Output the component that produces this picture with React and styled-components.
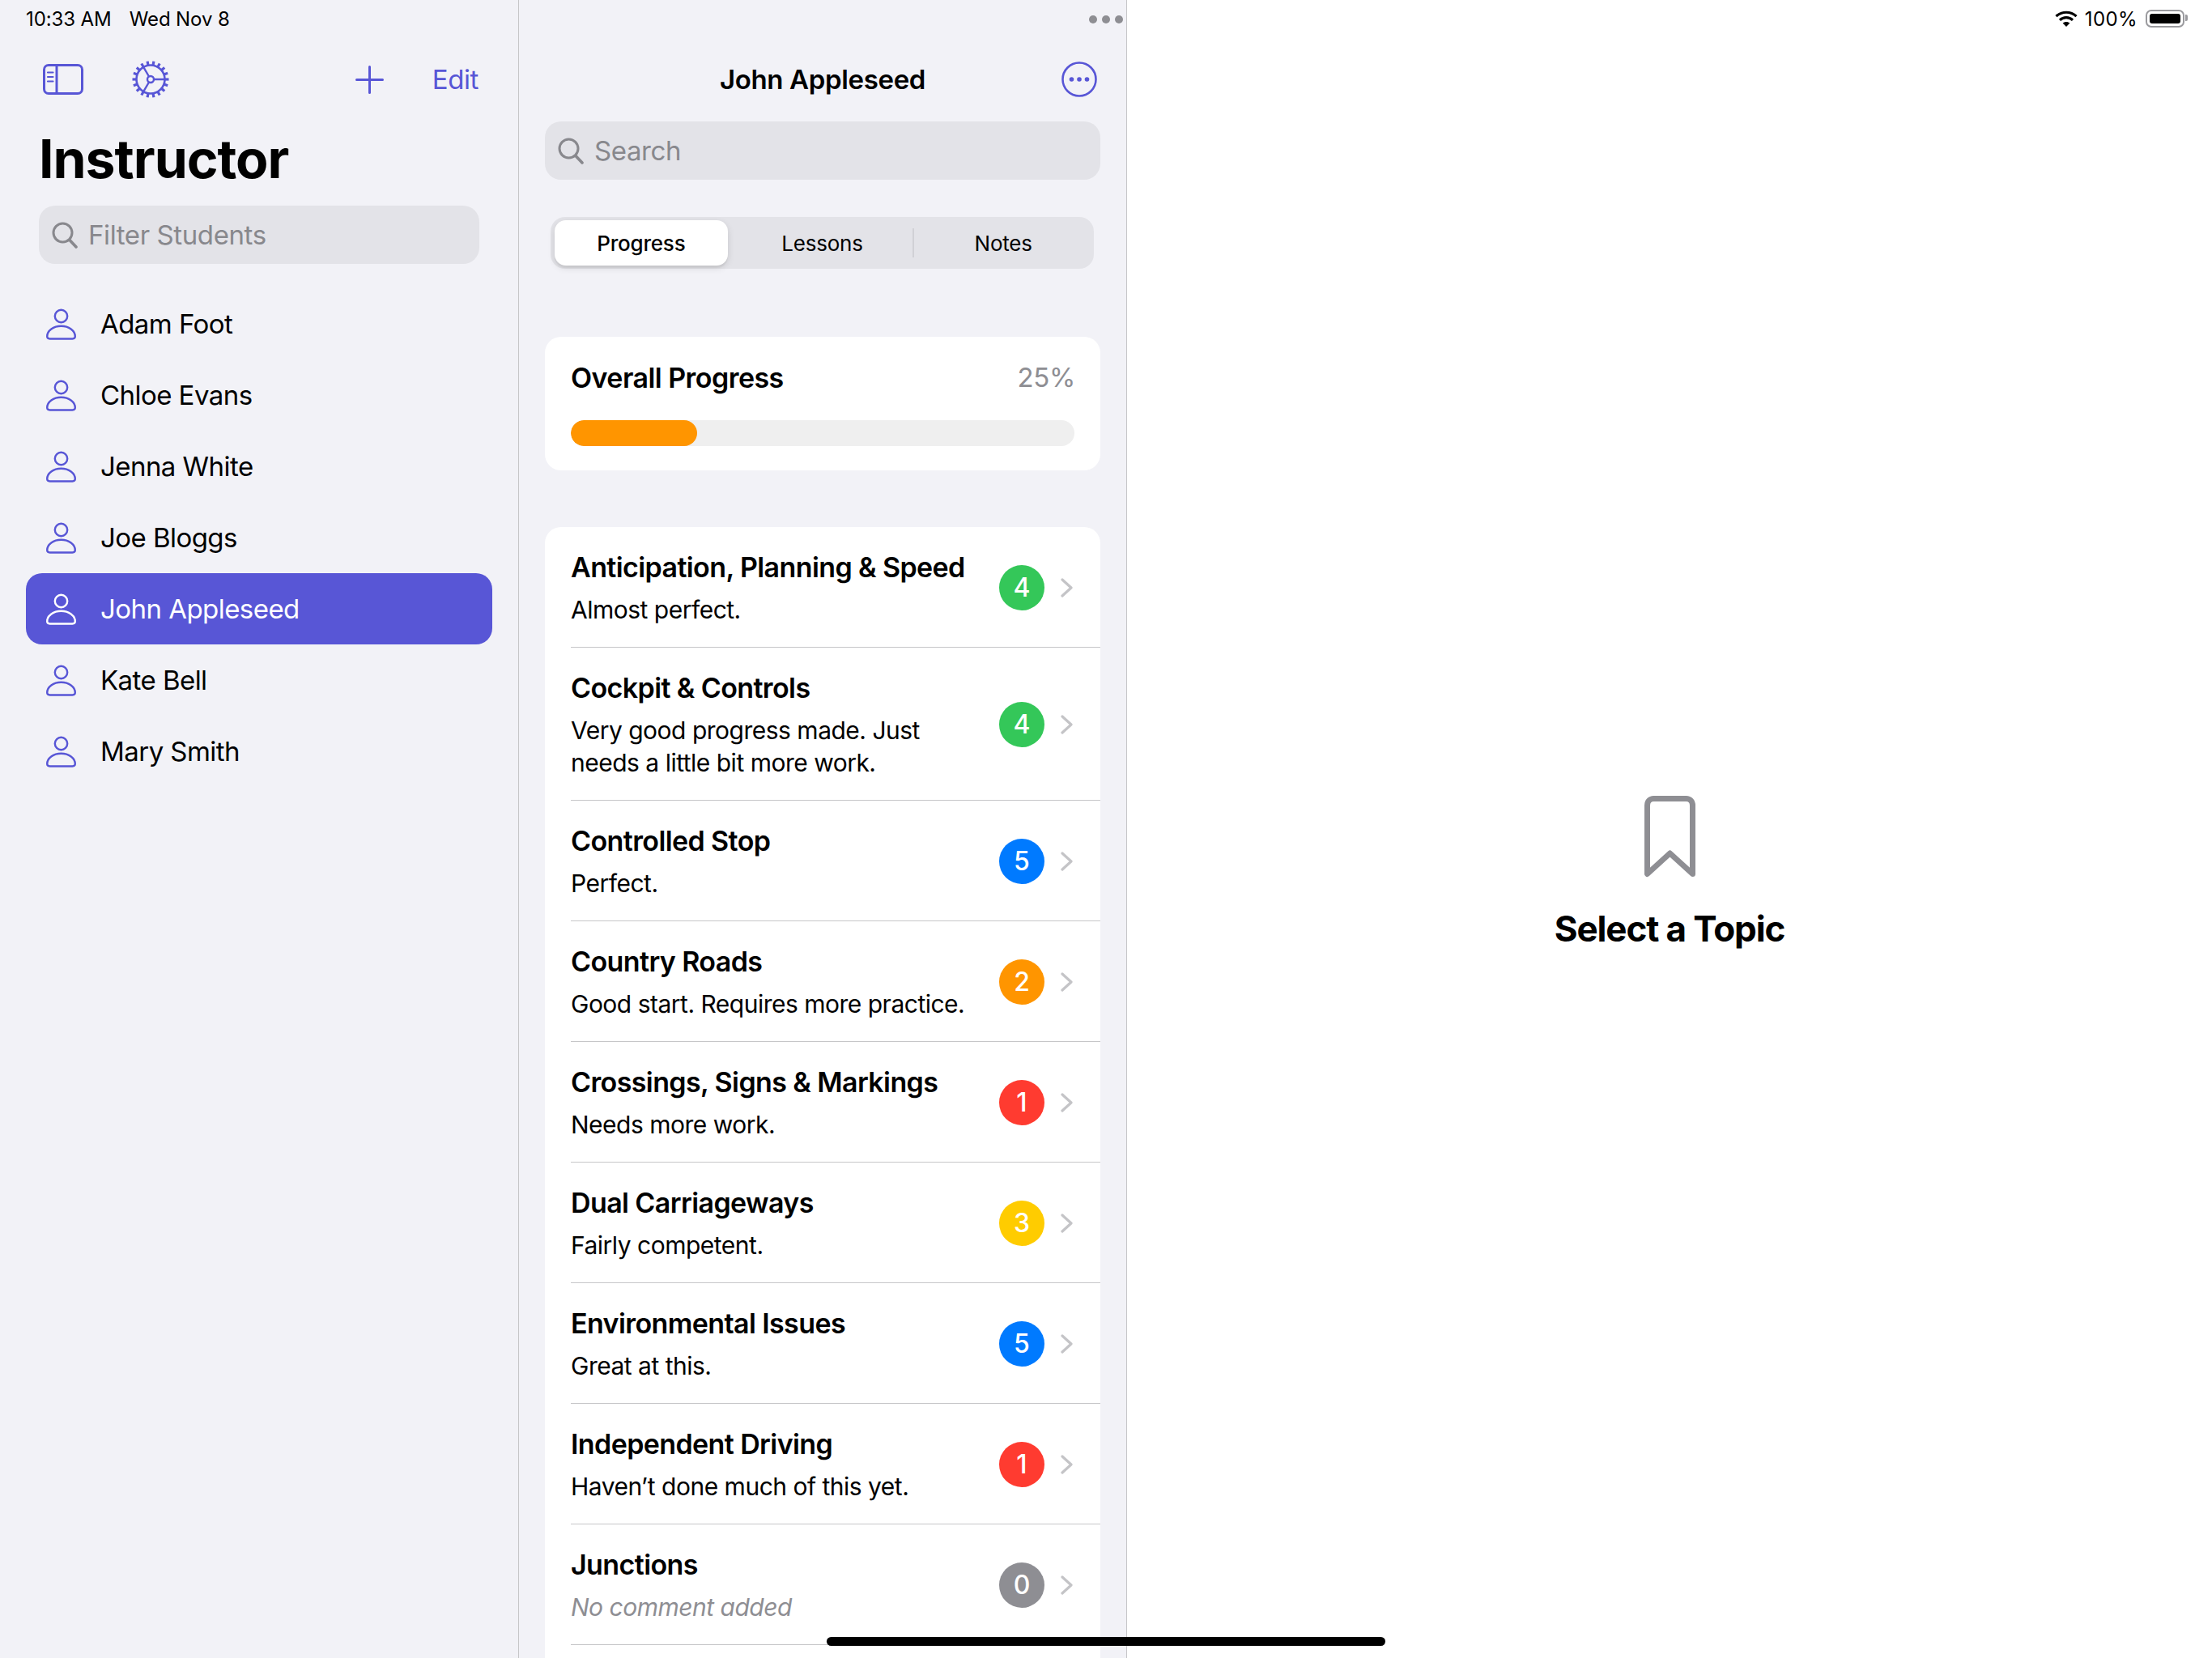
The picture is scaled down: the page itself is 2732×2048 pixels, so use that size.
import React from 'react';
import styled, { createGlobalStyle } from 'styled-components';

const INDIGO = '#5856d6';
const GREY = '#8e8e93';

const GlobalStyle = createGlobalStyle`
  html, body {
    margin: 0;
    padding: 0;
    background: #fff;
  }
  * {
    box-sizing: border-box;
  }
  body {
    font-family: Inter, "Liberation Sans", sans-serif;
    color: #000;
  }
`;

const Screen = styled.div`
  position: relative;
  display: flex;
  width: 2732px;
  height: 2048px;
  overflow: hidden;
  background: #fff;
`;

const Sidebar = styled.aside`
  flex: 0 0 641px;
  display: flex;
  flex-direction: column;
  background: #f2f2f7;
  border-right: 1px solid #c6c6c8;
`;

const StatusRow = styled.div`
  display: flex;
  align-items: center;
  height: 46px;
  flex: none;
`;

const SidebarStatus = styled(StatusRow)`
  padding-left: 32px;
  gap: 22px;
`;

const StatusText = styled.span`
  font-size: 24px;
  font-weight: 400;
  letter-spacing: -0.1px;
`;

const NavRow = styled.div`
  display: flex;
  align-items: center;
  height: 104px;
  padding: 0 49px 0 53px;
  gap: 60px;
`;

const PlusButton = styled.svg`
  margin-left: auto;
  display: block;
`;

const EditLabel = styled.span`
  color: ${INDIGO};
  font-size: 33px;
  letter-spacing: -0.4px;
`;

const LargeTitle = styled.h1`
  margin: 0 0 12px 48px;
  height: 92px;
  line-height: 92px;
  font-size: 66px;
  font-weight: 700;
  letter-spacing: -1px;
`;

const SearchField = styled.div`
  display: flex;
  align-items: center;
  gap: 13px;
  height: 72px;
  padding-left: 16px;
  background: #e3e3e8;
  border-radius: 20px;
  color: #88888d;
  font-size: 33px;
  letter-spacing: -0.4px;
`;

const SidebarSearch = styled(SearchField)`
  margin: 0 48px 0 48px;
`;

const StudentList = styled.div`
  margin: 30px 32px 0 32px;
  display: flex;
  flex-direction: column;
`;

const StudentRow = styled.div`
  display: flex;
  align-items: center;
  gap: 30px;
  height: 88px;
  padding-left: 25px;
  border-radius: 20px;
  font-size: 33px;
  letter-spacing: -0.55px;
  color: ${p => (p.$selected ? '#fff' : '#000')};
  background: ${p => (p.$selected ? INDIGO : 'transparent')};
`;

const Middle = styled.section`
  flex: 0 0 751px;
  display: flex;
  flex-direction: column;
  padding: 0 32px;
  background: #f2f2f7;
  border-right: 1px solid #c6c6c8;
`;

const DotsRow = styled(StatusRow)`
  justify-content: flex-end;
  gap: 6px;
  margin-right: -28px;
  padding-top: 2px;
`;

const Dot = styled.span`
  width: 10px;
  height: 10px;
  border-radius: 50%;
  background: ${GREY};
`;

const Header = styled.div`
  position: relative;
  flex: none;
  height: 104px;
  display: flex;
  align-items: center;
  justify-content: center;
`;

const HeaderTitle = styled.h2`
  margin: 0;
  font-size: 33px;
  font-weight: 600;
  letter-spacing: -0.35px;
`;

const MoreButton = styled.svg`
  position: absolute;
  right: 4px;
  top: 30px;
`;

const Segmented = styled.div`
  flex: none;
  display: grid;
  grid-template-columns: repeat(3, 1fr);
  height: 64px;
  margin: 46px 8px 0 7px;
  background: #e3e3e8;
  border-radius: 18px;
`;

const Segment = styled.div`
  position: relative;
  display: flex;
  align-items: center;
  justify-content: center;
  margin: 4px 5px;
  border-radius: 14px;
  font-size: 26px;
  font-weight: ${p => (p.$active ? 500 : 400)};
  letter-spacing: -0.2px;
  background: ${p => (p.$active ? '#fff' : 'transparent')};
  box-shadow: ${p => (p.$active ? '0 3px 8px rgba(0, 0, 0, 0.12), 0 3px 1px rgba(0, 0, 0, 0.04)' : 'none')};

  ${p =>
    p.$divider &&
    `&::before {
      content: '';
      position: absolute;
      left: -5px;
      top: 10px;
      bottom: 10px;
      width: 2px;
      background: #d1d1d6;
    }`}
`;

const ProgressCard = styled.div`
  flex: none;
  margin-top: 84px;
  padding: 30px 32px;
  background: #fff;
  border-radius: 20px;
`;

const ProgressHead = styled.div`
  display: flex;
  justify-content: space-between;
  align-items: center;
  height: 40px;
  margin-bottom: 33px;
`;

const ProgressTitle = styled.span`
  font-size: 34px;
  font-weight: 600;
  letter-spacing: -0.55px;
`;

const ProgressValue = styled.span`
  font-size: 33px;
  color: ${GREY};
  letter-spacing: -0.4px;
  margin-right: -1px;
`;

const ProgressTrack = styled.div`
  height: 32px;
  background: #efefef;
  border-radius: 16px;
  overflow: hidden;
`;

const ProgressFill = styled.div`
  height: 100%;
  background: #ff9500;
  border-radius: 16px;
`;

const TopicCard = styled.div`
  flex: 1;
  margin-top: 70px;
  padding-left: 32px;
  background: #fff;
  border-radius: 20px 20px 0 0;
`;

const TopicRow = styled.div`
  display: flex;
  align-items: center;
  padding: 30px 34px 26px 0;
  border-bottom: 1px solid #c6c6c8;
`;

const TopicText = styled.div`
  flex: 1;
  min-width: 0;
  margin-right: 24px;
`;

const TopicTitle = styled.div`
  font-size: 34px;
  line-height: 40px;
  font-weight: 600;
  letter-spacing: -0.6px;
  margin-bottom: 12px;
  white-space: nowrap;
`;

const TopicNote = styled.div`
  font-size: 30px;
  line-height: 40px;
  letter-spacing: -0.5px;
  color: ${p => (p.$empty ? GREY : '#000')};
  font-style: ${p => (p.$empty ? 'italic' : 'normal')};
`;

const Badge = styled.div`
  flex: none;
  width: 56px;
  height: 56px;
  margin: 0 20px 3px 0;
  border-radius: 50%;
  display: flex;
  align-items: center;
  justify-content: center;
  color: #fff;
  font-size: 32px;
  font-weight: 500;
  background: ${p => p.$color};
`;

const Chevron = styled.svg`
  flex: none;
  margin-bottom: 3px;
`;

const Detail = styled.main`
  flex: 1;
  display: flex;
  flex-direction: column;
`;

const DetailStatus = styled(StatusRow)`
  justify-content: flex-end;
  padding-right: 30px;
`;

const WifiIcon = styled.svg`
  margin-right: 9px;
`;

const BatteryPercent = styled.span`
  font-size: 24px;
  letter-spacing: 0.4px;
  margin-right: 10px;
`;

const Battery = styled.div`
  position: relative;
  width: 48px;
  height: 22px;
  padding: 3px;
  border: 2px solid #9a9a9e;
  border-radius: 7px;
  margin-right: 4px;

  &::before {
    content: '';
    display: block;
    height: 100%;
    background: #000;
    border-radius: 3px;
  }

  &::after {
    content: '';
    position: absolute;
    right: -6px;
    top: 4px;
    width: 3px;
    height: 8px;
    background: #9a9a9e;
    border-radius: 0 2px 2px 0;
  }
`;

const EmptyState = styled.div`
  display: flex;
  flex-direction: column;
  align-items: center;
  padding-top: 937px;
`;

const EmptyTitle = styled.div`
  margin-top: 39px;
  font-size: 44px;
  line-height: 48px;
  font-weight: 700;
  letter-spacing: -1.1px;
`;

const HomeIndicator = styled.div`
  position: absolute;
  left: 1021px;
  bottom: 15px;
  width: 690px;
  height: 11px;
  border-radius: 6px;
  background: #000;
`;

const SidebarToggleIcon = () => (
  <svg width="50" height="38" viewBox="0 0 50 38" fill="none" stroke={INDIGO} strokeWidth="3">
    <rect x="1.5" y="1.5" width="47" height="35" rx="5.5" />
    <path d="M17 1.5V36.5" />
    <path d="M6 10.5h6.5M6 16h6.5M6 21.5h6.5" strokeWidth="2.2" strokeLinecap="round" />
  </svg>
);

// gear with 18 teeth and three spokes
const GearIcon = () => {
  const teeth = Array.from({ length: 18 }, (_, i) => (i * Math.PI * 2) / 18);
  return (
    <svg width="46" height="46" viewBox="0 0 46 46" fill="none" stroke={INDIGO}>
      <circle cx="23" cy="23" r="17.5" strokeWidth="2.6" />
      <circle cx="23" cy="23" r="4" strokeWidth="2.4" />
      {teeth.map(a => (
        <line
          key={a}
          x1={23 + 17 * Math.cos(a)}
          y1={23 + 17 * Math.sin(a)}
          x2={23 + 22.5 * Math.cos(a)}
          y2={23 + 22.5 * Math.sin(a)}
          strokeWidth="3.2"
        />
      ))}
      <path d="M27 23H40.5M21 19.5L14.2 7.8M21 26.5L14.2 38.2" strokeWidth="2.4" />
    </svg>
  );
};

const PlusIcon = () => (
  <PlusButton width="35" height="35" viewBox="0 0 35 35" fill="none" stroke={INDIGO} strokeWidth="3" strokeLinecap="round">
    <path d="M17.5 1.5V33.5M1.5 17.5H33.5" />
  </PlusButton>
);

const SearchIcon = () => (
  <svg width="32" height="33" viewBox="0 0 32 33" fill="none" stroke="#88888d" strokeWidth="3" strokeLinecap="round">
    <circle cx="13.5" cy="13.5" r="11.5" />
    <path d="M22 22.5L30 31" strokeWidth="3.6" />
  </svg>
);

const PersonIcon = ({ color }) => (
  <svg width="37" height="39" viewBox="0 0 37 39" fill="none" stroke={color} strokeWidth="2.4">
    <circle cx="18.5" cy="9.5" r="7.7" />
    <path d="M4.5 37.5H32.5C34.4 37.5 35.8 36.4 35.8 34.6C35.8 27.4 28 21.8 18.5 21.8C9 21.8 1.2 27.4 1.2 34.6C1.2 36.4 2.6 37.5 4.5 37.5Z" />
  </svg>
);

const MoreIcon = () => (
  <MoreButton width="44" height="44" viewBox="0 0 44 44">
    <circle cx="22" cy="22" r="20.5" fill="none" stroke={INDIGO} strokeWidth="2.6" />
    <circle cx="12.5" cy="22" r="2.8" fill={INDIGO} />
    <circle cx="22" cy="22" r="2.8" fill={INDIGO} />
    <circle cx="31.5" cy="22" r="2.8" fill={INDIGO} />
  </MoreButton>
);

const ChevronIcon = () => (
  <Chevron width="15" height="24" viewBox="0 0 15 24" fill="none" stroke="#c4c4c7" strokeWidth="3.2" strokeLinecap="round" strokeLinejoin="round">
    <path d="M2 2L13 12L2 22" />
  </Chevron>
);

const Wifi = () => (
  <WifiIcon width="28" height="20" viewBox="0 0 28 20" fill="none" stroke="#000" strokeWidth="3.2">
    <path d="M1.5 7.2C8.5 0.6 19.5 0.6 26.5 7.2" />
    <path d="M6 11.8C10.5 7.6 17.5 7.6 22 11.8" />
    <path d="M14 20L9.6 15.6C12 13.4 16 13.4 18.4 15.6Z" fill="#000" stroke="none" />
  </WifiIcon>
);

const BookmarkIcon = () => (
  <svg width="63" height="101" viewBox="0 0 63 101" fill="none" stroke={GREY} strokeWidth="7" strokeLinejoin="round">
    <path d="M3.5 96.5V12C3.5 7 6.5 3.5 11.5 3.5H51.5C56.5 3.5 59.5 7 59.5 12V96.5L31.5 71Z" />
  </svg>
);

const students = ['Adam Foot', 'Chloe Evans', 'Jenna White', 'Joe Bloggs', 'John Appleseed', 'Kate Bell', 'Mary Smith'];

const scoreColors = {
  0: GREY,
  1: '#ff3b30',
  2: '#ff9500',
  3: '#ffcc00',
  4: '#34c759',
  5: '#007aff',
};

const topics = [
  { title: 'Anticipation, Planning & Speed', note: 'Almost perfect.', score: 4 },
  { title: 'Cockpit & Controls', note: 'Very good progress made. Just needs a little bit more work.', score: 4 },
  { title: 'Controlled Stop', note: 'Perfect.', score: 5 },
  { title: 'Country Roads', note: 'Good start. Requires more practice.', score: 2 },
  { title: 'Crossings, Signs & Markings', note: 'Needs more work.', score: 1 },
  { title: 'Dual Carriageways', note: 'Fairly competent.', score: 3 },
  { title: 'Environmental Issues', note: 'Great at this.', score: 5 },
  { title: 'Independent Driving', note: 'Haven’t done much of this yet.', score: 1 },
  { title: 'Junctions', note: null, score: 0 },
];

export default function App() {
  return (
    <Screen>
      <GlobalStyle />
      <Sidebar>
        <SidebarStatus>
          <StatusText>10:33 AM</StatusText>
          <StatusText>Wed Nov 8</StatusText>
        </SidebarStatus>
        <NavRow>
          <SidebarToggleIcon />
          <GearIcon />
          <PlusIcon />
          <EditLabel>Edit</EditLabel>
        </NavRow>
        <LargeTitle>Instructor</LargeTitle>
        <SidebarSearch>
          <SearchIcon />
          Filter Students
        </SidebarSearch>
        <StudentList>
          {students.map(name => (
            <StudentRow key={name} $selected={name === 'John Appleseed'}>
              <PersonIcon color={name === 'John Appleseed' ? '#fff' : INDIGO} />
              {name}
            </StudentRow>
          ))}
        </StudentList>
      </Sidebar>

      <Middle>
        <DotsRow>
          <Dot />
          <Dot />
          <Dot />
        </DotsRow>
        <Header>
          <HeaderTitle>John Appleseed</HeaderTitle>
          <MoreIcon />
        </Header>
        <SearchField>
          <SearchIcon />
          Search
        </SearchField>
        <Segmented>
          <Segment $active>Progress</Segment>
          <Segment>Lessons</Segment>
          <Segment $divider>Notes</Segment>
        </Segmented>
        <ProgressCard>
          <ProgressHead>
            <ProgressTitle>Overall Progress</ProgressTitle>
            <ProgressValue>25%</ProgressValue>
          </ProgressHead>
          <ProgressTrack>
            <ProgressFill style={{ width: '25%' }} />
          </ProgressTrack>
        </ProgressCard>
        <TopicCard>
          {topics.map(topic => (
            <TopicRow key={topic.title}>
              <TopicText>
                <TopicTitle>{topic.title}</TopicTitle>
                <TopicNote $empty={!topic.note}>{topic.note || 'No comment added'}</TopicNote>
              </TopicText>
              <Badge $color={scoreColors[topic.score]}>{topic.score}</Badge>
              <ChevronIcon />
            </TopicRow>
          ))}
        </TopicCard>
      </Middle>

      <Detail>
        <DetailStatus>
          <Wifi />
          <BatteryPercent>100%</BatteryPercent>
          <Battery />
        </DetailStatus>
        <EmptyState>
          <BookmarkIcon />
          <EmptyTitle>Select a Topic</EmptyTitle>
        </EmptyState>
      </Detail>
      <HomeIndicator />
    </Screen>
  );
}
